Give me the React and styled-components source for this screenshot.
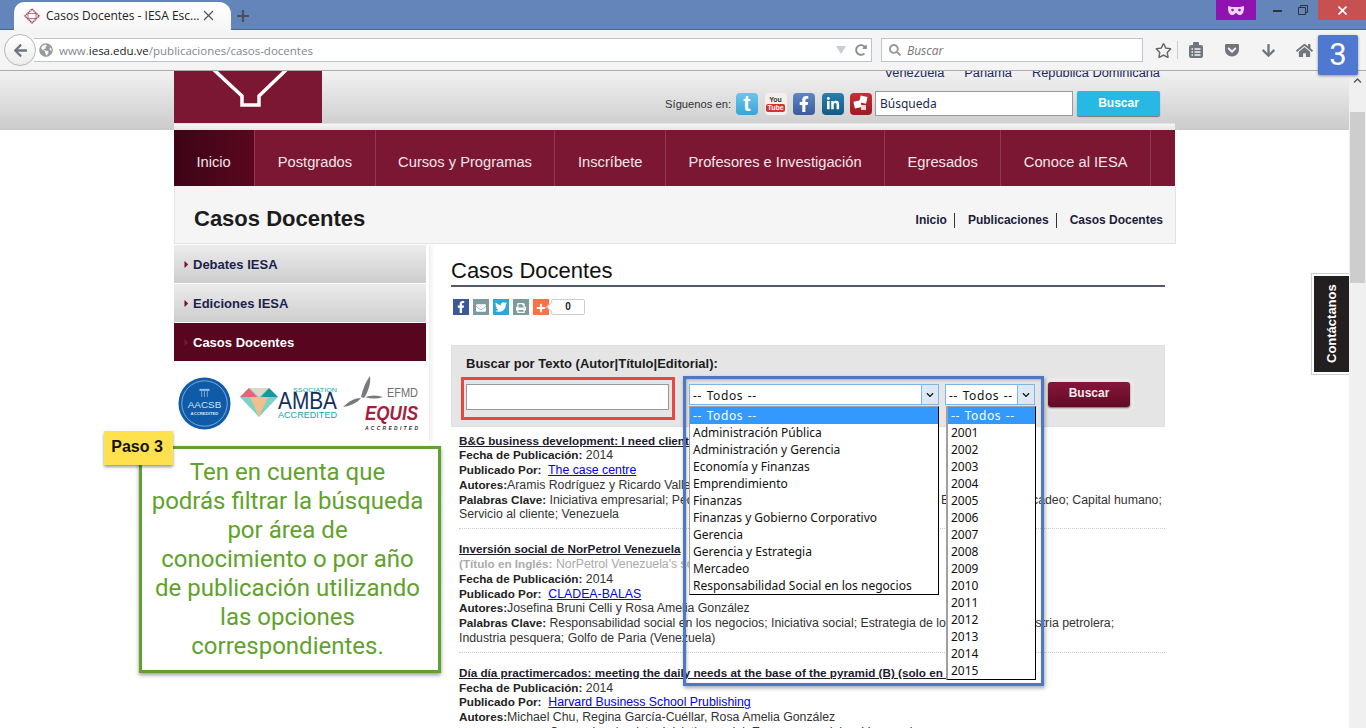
import React from "react";
import styled, { createGlobalStyle } from "styled-components";
import {
  FaArrowLeft,
  FaArrowDown,
  FaHome,
  FaRegStar,
  FaSearch,
  FaGlobeAmericas,
  FaFacebookF,
  FaTwitter,
  FaLinkedinIn,
  FaEnvelope,
  FaPrint,
  FaPlus,
  FaChevronDown,
  FaChevronUp,
  FaCaretRight,
  FaRedoAlt,
  FaGetPocket,
} from "react-icons/fa";

const GlobalStyle = createGlobalStyle`
  html, body {
    margin: 0;
    padding: 0;
    background: #fff;
    overflow: hidden;
  }
  * { box-sizing: border-box; }
`;

const navItems = [
  "Inicio",
  "Postgrados",
  "Cursos y Programas",
  "Inscríbete",
  "Profesores e Investigación",
  "Egresados",
  "Conoce al IESA",
];
const areas = [
  "-- Todos --",
  "Administración Pública",
  "Administración y Gerencia",
  "Economía y Finanzas",
  "Emprendimiento",
  "Finanzas",
  "Finanzas y Gobierno Corporativo",
  "Gerencia",
  "Gerencia y Estrategia",
  "Mercadeo",
  "Responsabilidad Social en los negocios",
];
const years = ["-- Todos --", "2001", "2002", "2003", "2004", "2005", "2006", "2007", "2008", "2009", "2010", "2011", "2012", "2013", "2014", "2015"];

const App = () => {
  return (
    <Page>
      <GlobalStyle />
      <TitleBar>
        <Tab>
          <Favicon viewBox="0 0 16 16">
            <path d="M8 1 15 8 8 15 1 8Z" fill="none" stroke="#a8324f" strokeWidth="1.4" strokeDasharray="1.5 .6" />
            <rect x="4" y="5.5" width="8" height="5" fill="#fff" stroke="#a8324f" strokeWidth=".7" />
          </Favicon>
          <TabTitle>Casos Docentes - IESA Esc...</TabTitle>
          <TabClose>
            <svg width="11" height="11" viewBox="0 0 11 11">
              <path d="M1 1 10 10M10 1 1 10" stroke="#555" strokeWidth="1.2" />
            </svg>
          </TabClose>
        </Tab>
        <NewTab>
          <svg width="12" height="12" viewBox="0 0 12 12">
            <path d="M6 0V12M0 6H12" stroke="#4a4f58" strokeWidth="2.2" />
          </svg>
        </NewTab>
        <Spacer />
        <PrivateMask>
          <svg width="16" height="9" viewBox="0 0 16 9">
            <path d="M0 0C3 1 5 1 8 1s5 0 8-1c.3 5-1 9-4.500 9C9.500 9 9 7 8 7S6.500 9 4.500 9C1 9 -.3 5 0 0Z" fill="#efd3f5" />
            <circle cx="4.500" cy="4" r="1.300" fill="#9013b0" />
            <circle cx="11.500" cy="4" r="1.300" fill="#9013b0" />
          </svg>
        </PrivateMask>
        <WinButton>
          <svg width="9" height="3" viewBox="0 0 9 3">
            <rect width="9" height="2" y="1" fill="#333" />
          </svg>
        </WinButton>
        <WinButton>
          <svg width="10" height="10" viewBox="0 0 10 10">
            <path d="M2.500 2.500V.5h7v7h-2M.5 2.500h7v7h-7Z" fill="none" stroke="#333" />
          </svg>
        </WinButton>
        <CloseButton>
          <svg width="9" height="9" viewBox="0 0 9 9">
            <path d="M.5.5 8.500 8.500M8.500.5 .5 8.500" stroke="#fff" strokeWidth="1.600" />
          </svg>
        </CloseButton>
      </TitleBar>

      <Toolbar>
        <BackButton>
          <FaArrowLeft size={15} color="#70767f" />
        </BackButton>
        <UrlBar>
          <FaGlobeAmericas size={14} color="#9a9a9a" />
          <UrlText>
            www.<b>iesa.edu.ve</b>/publicaciones/casos-docentes
          </UrlText>
          <Spacer />
          <svg width="10" height="8" viewBox="0 0 10 8">
            <path d="M0 0H10L5 8Z" fill="#c8ced6" />
          </svg>
          <FaRedoAlt size={12} color="#8a8f96" />
        </UrlBar>
        <SearchBar>
          <FaSearch size={12} color="#999" />
          <i>Buscar</i>
        </SearchBar>
        <StarCell>
          <FaRegStar size={17} color="#666" />
        </StarCell>
        <ToolCell>
          <svg width="16" height="17" viewBox="0 0 16 17">
            <rect x="1" y="3" width="14" height="13" rx="2" fill="#70767f" />
            <rect x="5" y="0" width="6" height="4" rx="1" fill="#70767f" />
            <path d="M3.500 7h1.500M3.500 10h1.500M3.500 13h1.500M6.500 7h6M6.500 10h6M6.500 13h6" stroke="#f4f4f4" strokeWidth="1.300" />
          </svg>
        </ToolCell>
        <ToolCell>
          <FaGetPocket size={16} color="#70767f" />
        </ToolCell>
        <ToolCell>
          <FaArrowDown size={15} color="#70767f" />
        </ToolCell>
        <ToolCell>
          <FaHome size={17} color="#70767f" />
        </ToolCell>
      </Toolbar>

      <Viewport>
        <Site>
          <Header>
            <HeaderInner>
              <Logo>
                <svg width="148" height="36" viewBox="0 0 148 36">
                  <path d="M39-2 68 25V34H85V25L113-2" fill="none" stroke="#fff" strokeWidth="3.500" />
                </svg>
              </Logo>
              <HeaderRight>
                <CountryRow>
                  <span>Venezuela</span>
                  <span>Panamá</span>
                  <span>República Dominicana</span>
                </CountryRow>
                <SocialRow>
                  <FollowLabel>Síguenos en:</FollowLabel>
                  <SocialIcon $bg="linear-gradient(#6cc6ea, #3aa4d6)">
                    <TwitterLetter>t</TwitterLetter>
                  </SocialIcon>
                  <SocialIcon $bg="#f4f1ec">
                    <YouTubeMark>
                      <span>You</span>
                      <b>Tube</b>
                    </YouTubeMark>
                  </SocialIcon>
                  <SocialIcon $bg="linear-gradient(#5f86c2, #3b5c9c)">
                    <FaFacebookF size={16} />
                  </SocialIcon>
                  <SocialIcon $bg="linear-gradient(#2a7fb0, #125a86)">
                    <FaLinkedinIn size={14} />
                  </SocialIcon>
                  <SocialIcon $bg="linear-gradient(#cb2c36, #9c1a24)">
                    <svg width="18" height="18" viewBox="0 0 18 18">
                      <rect x="8" y="1" width="7" height="7" fill="#fff" transform="rotate(12 11 4)" />
                      <rect x="2" y="6" width="7" height="7" fill="#fff" transform="rotate(-12 5 9)" />
                      <rect x="9" y="10" width="5" height="5" fill="#f2d5d5" />
                    </svg>
                  </SocialIcon>
                  <SiteSearch>Búsqueda</SiteSearch>
                  <SiteSearchButton>Buscar</SiteSearchButton>
                </SocialRow>
              </HeaderRight>
            </HeaderInner>
          </Header>

          <Nav>
            {navItems.map((item, i) => (
              <NavItem key={item} $active={i === 0}>
                {item}
              </NavItem>
            ))}
          </Nav>

          <TitleStrip>
            <PageTitle>Casos Docentes</PageTitle>
            <Breadcrumbs>
              <Crumb>Inicio</Crumb>
              <Crumb>Publicaciones</Crumb>
              <Crumb $last>Casos Docentes</Crumb>
            </Breadcrumbs>
          </TitleStrip>

          <Body>
            <Sidebar>
              <SideItem>
                <FaCaretRight size={11} color="#7b1733" />
                Debates IESA
              </SideItem>
              <SideItem>
                <FaCaretRight size={11} color="#7b1733" />
                Ediciones IESA
              </SideItem>
              <SideItem $active>
                <FaCaretRight size={11} color="#7b1733" />
                Casos Docentes
              </SideItem>
              <Accreditations>
                <LogoArt $top={3} $left={0} width="53" height="53" viewBox="0 0 56 56">
                  <circle cx="28" cy="28" r="27.500" fill="#0f5ba7" />
                  <circle cx="28" cy="28" r="24" fill="none" stroke="#9dc3e6" strokeWidth=".8" />
                  <path d="M23 13h10v1.200H23zM25 15v6M28 15v6M31 15v6" stroke="#9dc3e6" strokeWidth=".8" fill="#9dc3e6" />
                  <text x="28" y="33" textAnchor="middle" fontFamily="Liberation Sans" fontSize="10.500" fill="#cfe2f5">AACSB</text>
                  <text x="28" y="40" textAnchor="middle" fontFamily="Liberation Sans" fontSize="4.500" fontWeight="700" fill="#cfe2f5">ACCREDITED</text>
                </LogoArt>
                <LogoArt $top={12} $left={9} width="99" height="34" viewBox="0 0 99 34">
                  <path d="M0 11 9 2H29L38 11 19 31Z" fill="#7fd0c8" />
                  <path d="M0 11 9 2 17 11Z" fill="#e9607a" />
                  <path d="M21 11 29 2 38 11Z" fill="#159a9c" />
                  <path d="M10 11H28L19 31Z" fill="#f1c08a" />
                  <path d="M9 2 19 11 29 2Z" fill="#e0d5c7" />
                  <text x="38" y="23" fontFamily="Liberation Sans" fontSize="24" textLength="59" lengthAdjust="spacingAndGlyphs" fill="#12305c">AMBA</text>
                  <text x="53" y="6" fontFamily="Liberation Sans" fontSize="6" textLength="44" lengthAdjust="spacingAndGlyphs" fill="#14a3a5">SSOCIATION</text>
                  <text x="38" y="32" fontFamily="Liberation Sans" fontSize="9" textLength="59" lengthAdjust="spacingAndGlyphs" fill="#14a3a5">ACCREDITED</text>
                </LogoArt>
                <LogoArt $top={0} $left={4} width="76" height="58" viewBox="0 0 76 58">
                  <path d="M18 23C20 14 23 7 27 2 28 10 25 18 21 24ZM0 33C6 27 12 24 18 24 14 29 7 32 0 33ZM22 23C28 21 34 21 40 23 34 25 28 25 22 23Z" fill="#77797c" />
                  <text x="44" y="23" fontFamily="Liberation Sans" fontSize="13" textLength="31" lengthAdjust="spacingAndGlyphs" fill="#6e7074">EFMD</text>
                  <text x="22" y="46" fontFamily="Liberation Sans" fontSize="20" fontWeight="700" fontStyle="italic" textLength="53" lengthAdjust="spacingAndGlyphs" fill="#a31f3d">EQUIS</text>
                  <text x="22" y="56" fontFamily="Liberation Sans" fontSize="5" fontWeight="700" fontStyle="italic" textLength="53" fill="#333">ACCREDITED</text>
                </LogoArt>
              </Accreditations>
            </Sidebar>

            <Main>
              <MainTitle>Casos Docentes</MainTitle>
              <ShareRow>
                <ShareIcon $bg="#3b5998">
                  <FaFacebookF size={12} />
                </ShareIcon>
                <ShareIcon $bg="#7f9a9c">
                  <FaEnvelope size={10} />
                </ShareIcon>
                <ShareIcon $bg="#2ca7d8">
                  <FaTwitter size={12} />
                </ShareIcon>
                <ShareIcon $bg="#7f9a9c">
                  <FaPrint size={10} />
                </ShareIcon>
                <ShareIcon $bg="#fb7146">
                  <FaPlus size={10} />
                </ShareIcon>
                <ShareCount>0</ShareCount>
              </ShareRow>

              <SearchPanel>
                <SearchLabel>Buscar por Texto (Autor|Título|Editorial):</SearchLabel>
                <SearchRow>
                  <TextInput />
                  <SelectWrap $width={250}>
                    <SelectBox>
                      <SelectValue>-- Todos --</SelectValue>
                      <SelectArrow>
                        <FaChevronDown size={8} />
                      </SelectArrow>
                    </SelectBox>
                    <OptionList $width={250} $left={0}>
                      {areas.map((a, i) => (
                        <OptionRow key={a} $selected={i === 0}>
                          {a}
                        </OptionRow>
                      ))}
                    </OptionList>
                  </SelectWrap>
                  <SelectWrap $width={90}>
                    <SelectBox>
                      <SelectValue>-- Todos --</SelectValue>
                      <SelectArrow>
                        <FaChevronDown size={8} />
                      </SelectArrow>
                    </SelectBox>
                    <OptionList $width={90} $left={1} $thick>
                      {years.map((y, i) => (
                        <OptionRow key={y} $selected={i === 0}>
                          {y}
                        </OptionRow>
                      ))}
                    </OptionList>
                  </SelectWrap>
                  <SearchButton>Buscar</SearchButton>
                </SearchRow>
              </SearchPanel>

              <Results>
                <Result>
                  <ResultTitle>B&amp;G business development: I need clients (solo en inglés)</ResultTitle>
                  <Line><b>Fecha de Publicación:</b> 2014</Line>
                  <Line><b>Publicado Por:</b>&nbsp; <PubLink>The case centre</PubLink></Line>
                  <Line><b>Autores:</b>Aramis Rodríguez y Ricardo Valle</Line>
                  <Line>
                    <b>Palabras Clave:</b> Iniciativa empresarial; Pequeñas y medianas empresas; Empresa C.A.; Empresario; Mercadeo; Capital humano;
                    <br />
                    Servicio al cliente; Venezuela
                  </Line>
                </Result>
                <Result>
                  <ResultTitle>Inversión social de NorPetrol Venezuela</ResultTitle>
                  <Line $muted><b>(Título en Inglés:</b> NorPetrol Venezuela's social investment)</Line>
                  <Line><b>Fecha de Publicación:</b> 2014</Line>
                  <Line><b>Publicado Por:</b>&nbsp; <PubLink>CLADEA-BALAS</PubLink></Line>
                  <Line><b>Autores:</b>Josefina Bruni Celli y Rosa Amelia González</Line>
                  <Line>
                    <b>Palabras Clave:</b> Responsabilidad social en los negocios; Iniciativa social; Estrategia de los negocios; Industria petrolera;
                    <br />
                    Industria pesquera; Golfo de Paria (Venezuela)
                  </Line>
                </Result>
                <Result>
                  <ResultTitle>Día día practimercados: meeting the daily needs at the base of the pyramid (B) (solo en inglés)</ResultTitle>
                  <Line><b>Fecha de Publicación:</b> 2014</Line>
                  <Line><b>Publicado Por:</b>&nbsp; <PubLink>Harvard Business School Prublishing</PubLink></Line>
                  <Line><b>Autores:</b>Michael Chu, Regina García-Cuéllar, Rosa Amelia González</Line>
                  <Line><b>Palabras Clave:</b> Comercio minorista; Iniciativa social; Empresas sociales; Venezuela</Line>
                </Result>
              </Results>
            </Main>
          </Body>
        </Site>
        <Scrollbar>
          <FaChevronUp size={9} color="#555" />
          <ScrollThumb />
        </Scrollbar>
        <ContactTab>
          <ContactLabel>Contáctanos</ContactLabel>
        </ContactTab>
      </Viewport>

      <StepBadge>3</StepBadge>
      <RedFrame />
      <BlueFrame />
      <Callout>
        Ten en cuenta que
        <br />
        podrás filtrar la búsqueda
        <br />
        por área de
        <br />
        conocimiento o por año
        <br />
        de publicación utilizando
        <br />
        las opciones
        <br />
        correspondientes.
      </Callout>
      <StepNote>Paso 3</StepNote>
    </Page>
  );
};

const Page = styled.div`
  position: relative;
  width: 1366px;
  height: 728px;
  overflow: hidden;
  display: flex;
  flex-direction: column;
  font-family: "Liberation Sans", Arial, sans-serif;
  background: #fff;
`;
const Spacer = styled.div`
  flex: 1;
`;
const TitleBar = styled.div`
  height: 30px;
  flex: none;
  display: flex;
  align-items: flex-start;
  background: #6385ba;
  border-bottom: 1px solid #47689b;
  padding-left: 14px;
`;
const Tab = styled.div`
  width: 217px;
  height: 30px;
  margin-top: 2px;
  display: flex;
  align-items: center;
  padding: 0 17px 3px 10px;
  background: linear-gradient(#fff, #f5f5f5);
  border-radius: 10px 12px 0 0;
`;
const Favicon = styled.svg`
  width: 16px;
  height: 16px;
  flex: none;
`;
const TabTitle = styled.span`
  margin-left: 6px;
  flex: 1;
  font-family: "Open Sans", sans-serif;
  font-size: 12px;
  color: #222;
  white-space: nowrap;
`;
const TabClose = styled.span`
  display: flex;
`;
const NewTab = styled.div`
  margin: 10px 0 0 6px;
  display: flex;
`;
const PrivateMask = styled.div`
  width: 40px;
  height: 20px;
  margin-right: 8px;
  background: #9013b0;
  display: flex;
  align-items: center;
  justify-content: center;
`;
const WinButton = styled.div`
  width: 26px;
  height: 20px;
  display: flex;
  align-items: center;
  justify-content: center;
`;
const CloseButton = styled.div`
  width: 48px;
  height: 20px;
  margin-left: 2px;
  background: #c75050;
  display: flex;
  align-items: center;
  justify-content: center;
`;
const Toolbar = styled.div`
  height: 41px;
  flex: none;
  display: flex;
  align-items: center;
  padding-left: 4px;
  background: #f4f4f4;
  border-bottom: 1px solid #a9abae;
`;
const BackButton = styled.div`
  width: 32px;
  height: 32px;
  border-radius: 50%;
  flex: none;
  background: linear-gradient(#fff, #ececec);
  border: 1px solid #b5b7ba;
  display: flex;
  align-items: center;
  justify-content: center;
  position: relative;
  z-index: 1;
`;
const UrlBar = styled.div`
  width: 838px;
  height: 24px;
  margin-left: -2px;
  display: flex;
  align-items: center;
  gap: 6px;
  padding: 0 4px 0 5px;
  background: #fff;
  border: 1px solid #bcc4cf;
  border-left: none;
  svg:nth-of-type(2) {
    margin-right: 3px;
  }
`;
const UrlText = styled.span`
  font-family: "Open Sans", sans-serif;
  font-size: 11.5px;
  color: #808890;
  b {
    font-weight: 400;
    color: #222;
  }
`;
const SearchBar = styled.div`
  width: 262px;
  height: 24px;
  margin-left: 9px;
  display: flex;
  align-items: center;
  gap: 6px;
  padding-left: 7px;
  background: #fff;
  border: 1px solid #bcc4cf;
  font-family: "Open Sans", sans-serif;
  font-size: 12px;
  color: #777;
`;
const StarCell = styled.div`
  width: 32px;
  height: 18px;
  margin-left: 3px;
  padding-left: 4px;
  display: flex;
  align-items: center;
  justify-content: center;
  border-right: 1px solid #ccc;
`;
const ToolCell = styled.div`
  width: 36px;
  height: 20px;
  flex: none;
  display: flex;
  align-items: center;
  justify-content: center;
`;
const Viewport = styled.div`
  flex: 1;
  min-height: 0;
  display: flex;
  position: relative;
`;
const Site = styled.div`
  flex: 1;
  min-width: 0;
  overflow: hidden;
`;
const Header = styled.div`
  height: 59px;
  overflow: hidden;
  padding-left: 174px;
  background: linear-gradient(#f2f2f2, #cbcbcb);
`;
const HeaderInner = styled.div`
  width: 1001px;
  height: 59px;
  padding-right: 15px;
  display: flex;
  background: linear-gradient(transparent 52px, #f6f6f6 53px, #e6e6e6 59px);
`;
const Logo = styled.div`
  width: 148px;
  height: 52px;
  flex: none;
  background: #7b1733;
  display: flex;
  align-items: flex-start;
`;
const HeaderRight = styled.div`
  flex: 1;
  height: 45px;
  display: flex;
  flex-direction: column;
  align-items: flex-end;
  justify-content: flex-end;
`;
const CountryRow = styled.div`
  display: flex;
  gap: 20px;
  font-size: 12.800px;
  line-height: 15px;
  color: #1b2a5e;
  margin-bottom: 11px;
`;
const SocialRow = styled.div`
  display: flex;
  align-items: center;
  gap: 5px;
`;
const FollowLabel = styled.span`
  font-size: 11.200px;
  color: #333;
`;
const SocialIcon = styled.span`
  width: 22px;
  height: 22px;
  margin-right: 1.500px;
  border-radius: 4px;
  display: flex;
  align-items: center;
  justify-content: center;
  background: ${(props) => props.$bg};
  color: #fff;
`;
const TwitterLetter = styled.span`
  font-size: 22px;
  font-weight: 700;
  line-height: 20px;
`;
const YouTubeMark = styled.span`
  display: flex;
  flex-direction: column;
  align-items: center;
  font-size: 7px;
  line-height: 8px;
  color: #333;
  span {
    font-weight: 700;
  }
  b {
    padding: 0 1px;
    border-radius: 2px;
    background: #d3342c;
    color: #fff;
  }
`;
const SiteSearch = styled.div`
  width: 198px;
  height: 25px;
  margin-left: -3.500px;
  padding-left: 4px;
  background: #fff;
  border: 1px solid #999;
  font-family: "Noto Sans", sans-serif;
  font-size: 12px;
  line-height: 23px;
  color: #1b2a4e;
`;
const SiteSearchButton = styled.div`
  width: 83px;
  height: 25px;
  margin-left: -1px;
  background: #27b9e3;
  border-radius: 2px;
  box-shadow: 0 1px 1px #777;
  color: #fff;
  font-size: 12px;
  font-weight: 700;
  text-align: center;
  line-height: 24px;
`;
const Nav = styled.div`
  width: 1001px;
  height: 56px;
  margin-left: 174px;
  display: flex;
  background: #7b1733;
`;
const NavItem = styled.div`
  padding: 4px ${(props) => (props.$active ? "23.500px" : "22.500px")} 0 22.500px;
  line-height: 56px;
  font-size: 14.700px;
  color: #f3e4e8;
  border-right: 1px solid #8f3a52;
  background: ${(props) =>
    props.$active ? "linear-gradient(90deg, #3d0416, #59071f)" : "transparent"};
`;
const TitleStrip = styled.div`
  width: 1002px;
  height: 58px;
  margin-left: 174px;
  display: flex;
  align-items: center;
  justify-content: space-between;
  padding: 8px 12px 0 19px;
  background: #f5f5f5;
  border: 1px solid #e3e3e3;
  border-top: none;
`;
const PageTitle = styled.h1`
  margin: 0;
  font-size: 22px;
  font-weight: 700;
  color: #1c1c1c;
`;
const Breadcrumbs = styled.div`
  display: flex;
  gap: 13px;
  margin-top: 4px;
`;
const Crumb = styled.span`
  padding-right: ${(props) => (props.$last ? "0" : "7px")};
  border-right: ${(props) => (props.$last ? "none" : "1px solid #333")};
  font-size: 12px;
  font-weight: 700;
  line-height: 15px;
  color: #1c1c3c;
`;
const Body = styled.div`
  margin: 1px 0 0 174px;
  display: flex;
  align-items: flex-start;
`;
const Sidebar = styled.div`
  width: 256px;
  height: 196px;
  flex: none;
  display: flex;
  flex-direction: column;
  gap: 1px;
  padding-right: 3px;
  border-right: 1px solid #eee;
  box-shadow: 2px 0 3px #f2f2f2;
`;
const SideItem = styled.div`
  height: 38px;
  display: flex;
  align-items: center;
  gap: 1px;
  padding-left: 7px;
  font-size: 13px;
  font-weight: 700;
  color: ${(props) => (props.$active ? "#fff" : "#1b1f4e")};
  background: ${(props) =>
    props.$active ? "#58051f" : "linear-gradient(#ececec, #cdcdcd)"};
`;
const Accreditations = styled.div`
  display: flex;
  align-items: flex-start;
  padding: 12px 0 0 4px;
`;
const LogoArt = styled.svg`
  flex: none;
  margin-top: ${(props) => props.$top}px;
  margin-left: ${(props) => props.$left}px;
`;
const Main = styled.div`
  width: 714px;
  margin-left: 21px;
`;
const MainTitle = styled.h2`
  margin: 0;
  height: 42px;
  padding-top: 13px;
  font-size: 22px;
  font-weight: 400;
  line-height: 26px;
  color: #111;
  border-bottom: 2px solid #4f5a6b;
`;
const ShareRow = styled.div`
  height: 58px;
  padding: 12px 0 0 2px;
  display: flex;
  align-items: flex-start;
  gap: 4px;
`;
const ShareIcon = styled.span`
  width: 16px;
  height: 16px;
  display: flex;
  align-items: flex-end;
  justify-content: center;
  padding-bottom: 2px;
  color: #fff;
  background: ${(props) => props.$bg};
`;
const ShareCount = styled.span`
  position: relative;
  width: 34px;
  height: 16px;
  margin-left: -2px;
  border: 1px solid #ccc;
  border-radius: 2px;
  background: #fff;
  font-size: 10px;
  font-weight: 700;
  line-height: 14px;
  text-align: center;
  color: #222;
  &::before {
    content: "";
    position: absolute;
    left: -4px;
    top: 3px;
    width: 7px;
    height: 7px;
    background: #fff;
    border-left: 1px solid #ccc;
    border-bottom: 1px solid #ccc;
    transform: rotate(45deg);
  }
`;
const SearchPanel = styled.div`
  height: 82px;
  padding: 10px 0 0 14px;
  background: #e5e5e5;
  border: 1px solid #e0e0e0;
`;
const SearchLabel = styled.div`
  font-size: 13px;
  font-weight: 700;
  line-height: 15px;
  color: #1c1c1c;
`;
const SearchRow = styled.div`
  display: flex;
  align-items: flex-start;
  margin-top: 13px;
`;
const TextInput = styled.div`
  width: 203px;
  height: 26px;
  background: #fff;
  border: 1px solid #999;
`;
const SelectWrap = styled.div`
  position: relative;
  width: ${(props) => props.$width}px;
  margin-left: ${(props) => (props.$width > 100 ? "20px" : "6px")};
`;
const SelectBox = styled.div`
  height: 21px;
  padding: 1px 0 0 3px;
  display: flex;
  align-items: center;
  justify-content: space-between;
  background: #fff;
  border: 1px solid #7eb4ea;
  font-family: "Noto Sans", sans-serif;
  font-size: 12px;
  color: #111;
`;
const SelectValue = styled.span`
  letter-spacing: 0.6px;
  word-spacing: 1px;
`;
const SelectArrow = styled.span`
  width: 17px;
  height: 19px;
  margin-top: -1px;
  display: flex;
  align-items: center;
  justify-content: center;
  color: #111;
  background: #dce8f5;
  border-left: 1px solid #7eb4ea;
`;
const OptionList = styled.div`
  position: absolute;
  top: 22px;
  left: ${(props) => props.$left}px;
  width: ${(props) => props.$width}px;
  z-index: 5;
  background: #fff;
  border: 1px solid #000;
  border-color: #a0a0a0 #000 #000 #a0a0a0;
  border-left-width: ${(props) => (props.$thick ? "2px" : "1px")};
`;
const OptionRow = styled.div`
  height: 17px;
  padding-left: 3px;
  font-family: "Noto Sans", sans-serif;
  font-size: 12px;
  line-height: 17px;
  white-space: nowrap;
  letter-spacing: ${(props) => (props.$selected ? "0.6px" : "0")};
  word-spacing: ${(props) => (props.$selected ? "1px" : "0")};
  color: ${(props) => (props.$selected ? "#fff" : "#111")};
  background: ${(props) => (props.$selected ? "#3399ff" : "transparent")};
`;
const SearchButton = styled.div`
  width: 82px;
  height: 25px;
  margin: -2px 0 0 13px;
  border-radius: 3px;
  background: linear-gradient(#85173a, #640a26);
  box-shadow: 0 1px 2px #666, 0 0 0 4px #eaeaea;
  color: #eee;
  font-size: 12px;
  font-weight: 700;
  line-height: 23px;
  text-align: center;
`;
const Results = styled.div`
  padding-top: 6.500px;
`;
const Result = styled.div`
  margin: 0 0 13px 8px;
  padding-bottom: 6px;
  border-bottom: 1px dotted #ccc;
  font-size: 12.300px;
  line-height: 14.800px;
  color: #333;
`;
const ResultTitle = styled.div`
  font-size: 11.700px;
  font-weight: 700;
  color: #1c1c2e;
  text-decoration: underline;
`;
const Line = styled.div`
  color: ${(props) => (props.$muted ? "#aaa" : "#333")};
  b {
    font-size: 11.700px;
    color: ${(props) => (props.$muted ? "#aaa" : "#222")};
  }
`;
const PubLink = styled.span`
  color: #0000ee;
  text-decoration: underline;
`;
const Scrollbar = styled.div`
  width: 17px;
  flex: none;
  display: flex;
  flex-direction: column;
  align-items: center;
  padding-top: 5px;
  background: #f0f0f0;
`;
const ScrollThumb = styled.div`
  width: 15px;
  height: 171px;
  margin-top: 27px;
  background: #cdcdcd;
`;
const ContactTab = styled.div`
  position: absolute;
  top: 202px;
  right: 17px;
  width: 38px;
  height: 102px;
  padding: 2px 0 2px 2px;
  background: #fff;
  border: 1px solid #ccc;
  border-right: none;
`;
const ContactLabel = styled.div`
  width: 35px;
  height: 100%;
  display: flex;
  align-items: center;
  justify-content: center;
  background: #231f20;
  color: #fff;
  font-size: 13px;
  font-weight: 700;
  writing-mode: vertical-rl;
  transform: rotate(180deg);
`;
const StepBadge = styled.div`
  position: absolute;
  left: 1318px;
  top: 35px;
  width: 40px;
  height: 40px;
  border-radius: 2px;
  background: #4f78d0;
  box-shadow: 0 1px 3px rgba(0, 0, 0, 0.4);
  color: #fff;
  font-family: Roboto, sans-serif;
  font-size: 31px;
  line-height: 40px;
  text-align: center;
`;
const RedFrame = styled.div`
  position: absolute;
  left: 461px;
  top: 377px;
  width: 214px;
  height: 43px;
  border: 3px solid #e8483f;
`;
const BlueFrame = styled.div`
  position: absolute;
  left: 683px;
  top: 376px;
  width: 361px;
  height: 310px;
  border: 3px solid #4f78c4;
  box-shadow: 1px 2px 4px rgba(0, 0, 0, 0.35), inset 1px 1px 3px rgba(0, 0, 0, 0.25);
`;
const Callout = styled.div`
  position: absolute;
  left: 139px;
  top: 446px;
  width: 302px;
  height: 227px;
  padding: 9px 5px 0 0;
  background: #fff;
  border: 3px solid #5fa22c;
  box-shadow: 0 2px 4px rgba(0, 0, 0, 0.4);
  color: #5fa22c;
  font-family: Roboto, sans-serif;
  font-size: 24px;
  line-height: 29px;
  text-align: center;
`;
const StepNote = styled.div`
  position: absolute;
  left: 104px;
  top: 431px;
  width: 69px;
  height: 34px;
  padding-right: 3px;
  background: #ffe14d;
  box-shadow: 0 2px 3px rgba(0, 0, 0, 0.4);
  color: #111;
  font-size: 16px;
  font-weight: 700;
  line-height: 31px;
  text-align: center;
`;

export default App;
